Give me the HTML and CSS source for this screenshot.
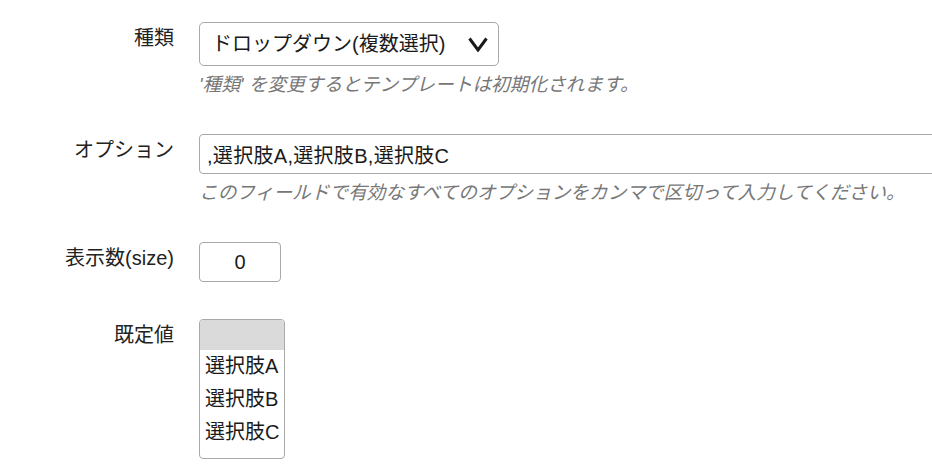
FILE: index.html
```html
<!DOCTYPE html>
<html lang="ja">
<head>
    <meta charset="UTF-8">
    <meta name="viewport" content="width=device-width, initial-scale=1.0">
    <title>フィールド設定</title>
    <link rel="stylesheet" href="styles.css">
</head>
<body>
    <form class="field-form">
        <div class="field-row">
            <label class="field-label" for="kind">種類</label>
            <div class="field-body">
                <div class="select-wrap">
                    <select id="kind" class="field-select">
                        <option>ドロップダウン(複数選択)</option>
                    </select>
                    <svg class="select-arrow" width="20" height="15" viewBox="0 0 20 15" aria-hidden="true">
                        <polyline points="1.5,1.5 10,13 18.5,1.5" fill="none" stroke="#1a1a1a" stroke-width="3"/>
                    </svg>
                </div>
                <p class="field-help">'種類' を変更するとテンプレートは初期化されます。</p>
            </div>
        </div>

        <div class="field-row">
            <label class="field-label" for="options">オプション</label>
            <div class="field-body clip">
                <input type="text" id="options" class="field-input wide" value=",選択肢A,選択肢B,選択肢C">
                <p class="field-help">このフィールドで有効なすべてのオプションをカンマで区切って入力してください。</p>
            </div>
        </div>

        <div class="field-row">
            <label class="field-label" for="size">表示数(size)</label>
            <div class="field-body">
                <input type="text" id="size" class="field-input small" value="0">
            </div>
        </div>

        <div class="field-row">
            <label class="field-label" for="default">既定値</label>
            <div class="field-body">
                <select id="default" class="field-list" multiple size="4">
                    <option class="is-empty" selected></option>
                    <option>選択肢A</option>
                    <option>選択肢B</option>
                    <option>選択肢C</option>
                </select>
            </div>
        </div>
    </form>
</body>
</html>
```

FILE: styles.css
```css
body {
    margin: 0;
    padding-top: 22px;
    font-family: "Liberation Sans", "Noto Sans CJK JP", sans-serif;
    color: #222;
    background: #fff;
}
.field-row {
    display: grid;
    grid-template-columns: 174px 1fr;
    column-gap: 25px;
    margin-bottom: 37px;
}
.field-label {
    text-align: right;
    font-size: 20px;
    line-height: 24px;
    padding-top: 4px;
    color: #222;
}
.field-body {
    min-width: 0;
}
.field-body.clip {
    overflow: hidden;
}
.select-wrap {
    position: relative;
    width: 300px;
}
.field-select {
    appearance: none;
    -webkit-appearance: none;
    width: 300px;
    height: 44px;
    margin: 0;
    padding: 0 40px 0 12px;
    border: 1px solid #a9a9a9;
    border-radius: 5px;
    background: #fff;
    font-family: inherit;
    font-size: 20px;
    color: #1a1a1a;
}
.select-arrow {
    position: absolute;
    right: 11px;
    top: 15px;
    pointer-events: none;
}
.field-input {
    box-sizing: border-box;
    height: 40px;
    margin: 0;
    padding: 0 7px;
    border: 1px solid #a9a9a9;
    border-radius: 4px;
    font-family: inherit;
    font-size: 20px;
    color: #1a1a1a;
    background: #fff;
}
.field-input.wide {
    width: 780px;
    letter-spacing: 0.3px;
}
.field-input.small {
    width: 82px;
    text-align: center;
}
.field-help {
    margin: 7px 0 0;
    font-size: 18.7px;
    line-height: 24px;
    font-style: italic;
    color: #777;
    white-space: nowrap;
}
.field-list {
    box-sizing: border-box;
    width: 86px;
    height: 140px;
    margin: 0;
    padding: 0;
    border: 1px solid #a9a9a9;
    border-radius: 4px;
    overflow: hidden;
    font-family: inherit;
    font-size: 20px;
    color: #1a1a1a;
    background: #fff;
}
.field-list option {
    height: 33px;
    line-height: 33px;
    padding: 0 5px;
}
.field-list option.is-empty {
    height: 30px;
}
.field-list option:checked {
    background: linear-gradient(#dadada, #dadada);
    color: #1a1a1a;
}
```
